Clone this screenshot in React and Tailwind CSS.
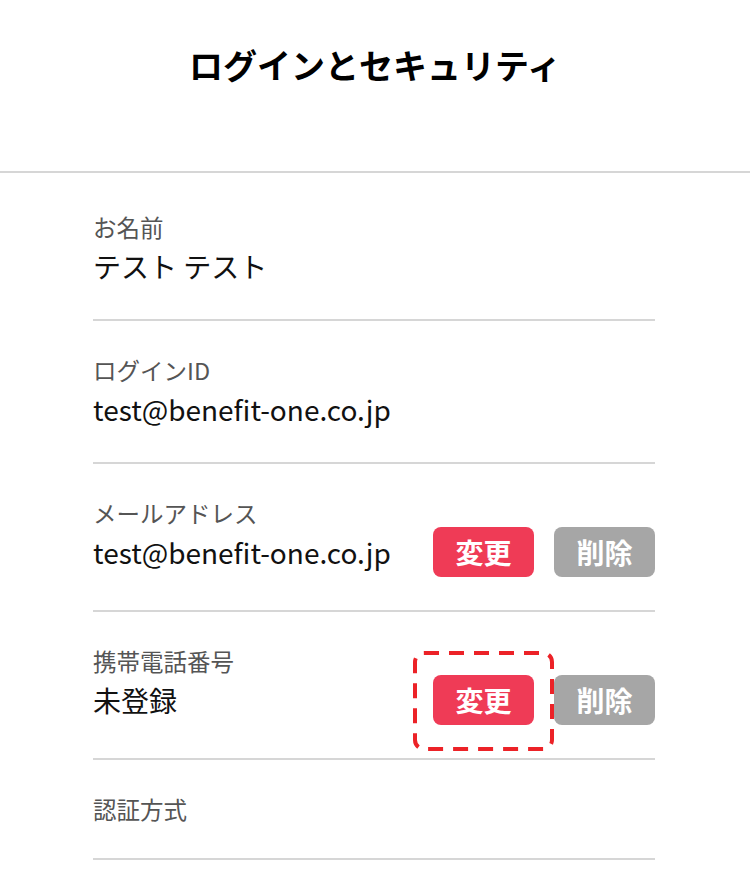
import React from 'react';

const font = { fontFamily: '"Noto Sans CJK JP", "Noto Sans", sans-serif' };

function ActionButtons({ highlight = false }) {
  return (
    <div className="flex gap-[20px]">
      <div className="relative">
        {highlight && (
          <svg
            className="absolute pointer-events-none"
            style={{ left: -20, top: -24, width: 141, height: 100 }}
            viewBox="0 0 141 100"
          >
            <rect
              x="2"
              y="2"
              width="137"
              height="96"
              rx="9"
              fill="none"
              stroke="#ec2227"
              strokeWidth="4"
              strokeDasharray="15 10"
            />
          </svg>
        )}
        <button className="w-[101px] h-[50px] rounded-[8px] bg-[#ef3b56] text-white text-[28px] font-bold leading-none">
          変更
        </button>
      </div>
      <button className="w-[101px] h-[50px] rounded-[8px] bg-[#a6a6a6] text-white text-[28px] font-bold leading-none">
        削除
      </button>
    </div>
  );
}

function InfoRow({ label, value, actions, highlight, first }) {
  return (
    <div className={`border-b-2 border-[#d6d6d6] pt-[33px] pb-[33px] ${first ? 'mt-[5px]' : ''}`}>
      <div className="text-[23.5px] leading-[32px] text-[#555]">{label}</div>
      {value !== undefined &&
        (actions ? (
          <div className="flex items-center justify-between h-[50px] mt-[-2px]">
            <div className="text-[28px] leading-[40px] text-[#111]">{value}</div>
            <ActionButtons highlight={highlight} />
          </div>
        ) : (
          <div className="text-[28px] leading-[40px] text-[#111] mt-[3px]">{value}</div>
        ))}
    </div>
  );
}

export default function App() {
  const rows = [
    { label: 'お名前', value: 'テスト テスト' },
    { label: 'ログインID', value: 'test@benefit-one.co.jp' },
    { label: 'メールアドレス', value: 'test@benefit-one.co.jp', actions: true },
    { label: '携帯電話番号', value: '未登録', actions: true, highlight: true },
    { label: '認証方式' },
  ];

  return (
    <div className="w-[750px] h-[890px] bg-white overflow-hidden" style={font}>
      {/* ヘッダー */}
      <div className="h-[173px] border-b-2 border-[#d6d6d6] pt-[43px] text-center">
        <h1 className="text-[34px] leading-[44px] font-bold text-black">ログインとセキュリティ</h1>
      </div>

      {/* 項目一覧 */}
      <div className="pl-[93px] pr-[95px]">
        {rows.map((row, i) => (
          <InfoRow key={row.label} first={i === 0} {...row} />
        ))}
      </div>
    </div>
  );
}
